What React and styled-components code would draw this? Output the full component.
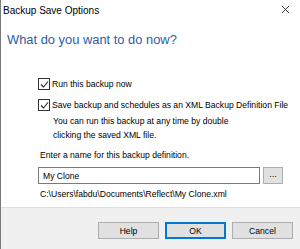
import React, { useState } from "react";
import styled, { createGlobalStyle } from "styled-components";

const GlobalStyle = createGlobalStyle`
  html, body {
    margin: 0;
    padding: 0;
    background: #fff;
  }
  body {
    font-family: "Liberation Sans", Arial, sans-serif;
    color: #000;
  }
`;

const Window = styled.div`
  width: 300px;
  height: 249px;
  box-sizing: border-box;
  border-left: 1px solid #7a7a7a;
  display: flex;
  flex-direction: column;
  background: #fff;
  overflow: hidden;
`;

const TitleBar = styled.div`
  height: 20px;
  display: flex;
  align-items: center;
  justify-content: space-between;
  padding: 0 10px 0 2px;
  font-size: 10px;
  flex-shrink: 0;
`;

const CloseIcon = styled.svg`
  width: 9px;
  height: 9px;
  margin-top: -1px;
`;

const Body = styled.div`
  flex: 1;
  padding: 0 0 0 6px;
  display: flex;
  flex-direction: column;
  white-space: nowrap;
`;

const Heading = styled.div`
  margin-top: 11px;
  font-size: 12.9px;
  color: #2d5ca8;
  line-height: 18px;
`;

const Options = styled.div`
  margin: 29px 0 0 31px;
  display: flex;
  flex-direction: column;
`;

const CheckRow = styled.label`
  display: flex;
  align-items: center;
  gap: 2px;
  font-size: 8.6px;
  line-height: 12px;
  margin-bottom: ${(p) => p.$gap || 0}px;
`;

const Box = styled.span`
  width: 10px;
  height: 10px;
  border: 1px solid #333;
  background: #fff;
  display: flex;
  align-items: center;
  justify-content: center;
`;

const Note = styled.div`
  margin: 3px 0 0 15px;
  font-size: 8.6px;
  line-height: 14px;
`;

const Label = styled.div`
  margin-top: 7px;
  font-size: 8.6px;
  line-height: 13px;
  padding-left: 2px;
`;

const InputRow = styled.div`
  display: flex;
  gap: 3px;
  margin-top: 5px;
`;

const NameInput = styled.input`
  width: 222px;
  height: 17px;
  box-sizing: border-box;
  border: 1px solid #7a7a7a;
  padding: 0 4px;
  font-family: "Liberation Sans", Arial, sans-serif;
  font-size: 8.6px;
  outline: none;
`;

const BrowseButton = styled.button`
  width: 20px;
  height: 17px;
  box-sizing: border-box;
  border: 1px solid #adadad;
  background: #e1e1e1;
  font-family: "Liberation Sans", Arial, sans-serif;
  font-size: 9px;
  padding: 0 0 3px;
  line-height: 1;
`;

const Path = styled.div`
  margin-top: 4px;
  font-size: 8.6px;
  line-height: 13px;
  padding-left: 2px;
`;

const Footer = styled.div`
  height: 42px;
  flex-shrink: 0;
  background: #f0f0f0;
  border-top: 1px solid #dfdfdf;
  box-sizing: border-box;
  display: flex;
  justify-content: flex-end;
  align-items: flex-start;
  gap: 6px;
  padding: 14px 7px 0 0;
`;

const Button = styled.button`
  width: 61px;
  height: 17px;
  box-sizing: border-box;
  border: ${(p) => (p.$primary ? "2px solid #0078d7" : "1px solid #adadad")};
  background: #e1e1e1;
  font-family: "Liberation Sans", Arial, sans-serif;
  font-size: 8.6px;
  color: #000;
  padding: 0;
`;

const Check = () => (
  <svg width="9" height="9" viewBox="0 0 9 9">
    <path d="M1 4.5 L3.5 7 L8 1.5" fill="none" stroke="#222" strokeWidth="1.1" />
  </svg>
);

const App = () => {
  const [name, setName] = useState("My Clone");

  return (
    <>
      <GlobalStyle />
      <Window>
        <TitleBar>
          <span>Backup Save Options</span>
          <CloseIcon viewBox="0 0 10 10">
            <path d="M1 1 L9 9 M9 1 L1 9" stroke="#222" strokeWidth="1" />
          </CloseIcon>
        </TitleBar>
        <Body>
          <Heading>What do you want to do now?</Heading>
          <Options>
            <CheckRow $gap={9}>
              <Box><Check /></Box>
              Run this backup now
            </CheckRow>
            <CheckRow>
              <Box><Check /></Box>
              Save backup and schedules as an XML Backup Definition File
            </CheckRow>
            <Note>
              You can run this backup at any time by double
              <br />
              clicking the saved XML file.
            </Note>
            <Label>Enter a name for this backup definition.</Label>
            <InputRow>
              <NameInput value={name} onChange={(e) => setName(e.target.value)} />
              <BrowseButton>...</BrowseButton>
            </InputRow>
            <Path>C:\Users\fabdu\Documents\Reflect\My Clone.xml</Path>
          </Options>
        </Body>
        <Footer>
          <Button>Help</Button>
          <Button $primary>OK</Button>
          <Button>Cancel</Button>
        </Footer>
      </Window>
    </>
  );
};

export default App;
